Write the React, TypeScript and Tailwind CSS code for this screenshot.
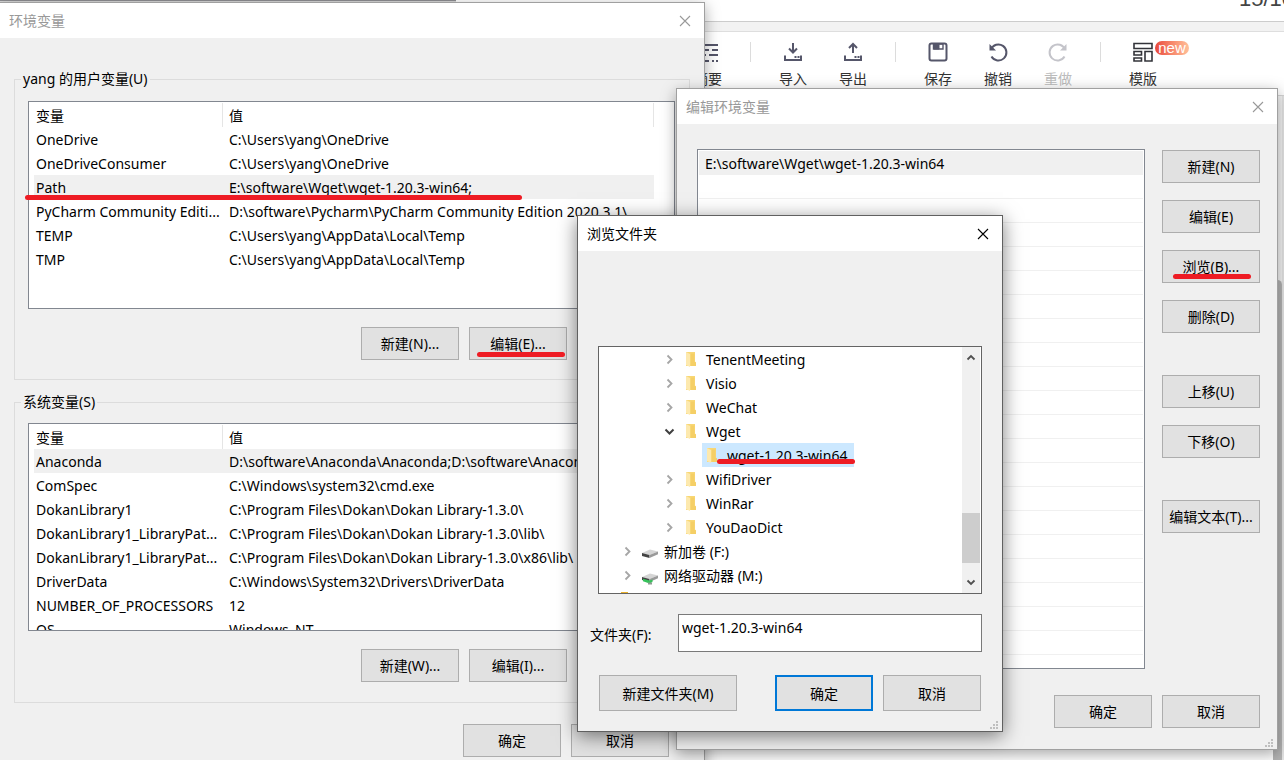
import React from "react";

type Pair = [string, string];

const userVars: Pair[] = [
  ["OneDrive", "C:\\Users\\yang\\OneDrive"],
  ["OneDriveConsumer", "C:\\Users\\yang\\OneDrive"],
  ["Path", "E:\\software\\Wget\\wget-1.20.3-win64;"],
  ["PyCharm Community Editi...", "D:\\software\\Pycharm\\PyCharm Community Edition 2020.3.1\\..."],
  ["TEMP", "C:\\Users\\yang\\AppData\\Local\\Temp"],
  ["TMP", "C:\\Users\\yang\\AppData\\Local\\Temp"],
];

const systemVars: Pair[] = [
  ["Anaconda", "D:\\software\\Anaconda\\Anaconda;D:\\software\\Anaconda"],
  ["ComSpec", "C:\\Windows\\system32\\cmd.exe"],
  ["DokanLibrary1", "C:\\Program Files\\Dokan\\Dokan Library-1.3.0\\"],
  ["DokanLibrary1_LibraryPat...", "C:\\Program Files\\Dokan\\Dokan Library-1.3.0\\lib\\"],
  ["DokanLibrary1_LibraryPat...", "C:\\Program Files\\Dokan\\Dokan Library-1.3.0\\x86\\lib\\"],
  ["DriverData", "C:\\Windows\\System32\\Drivers\\DriverData"],
  ["NUMBER_OF_PROCESSORS", "12"],
  ["OS", "Windows_NT"],
];

function Stroke({ className }: { className: string }) {
  return <span aria-hidden="true" className={"absolute z-10 h-[5px] rounded-full bg-[#ee1c24] " + className} />;
}

function Btn({
  children,
  className = "w-[98px] h-[33px]",
  primary = false,
}: {
  children: React.ReactNode;
  className?: string;
  primary?: boolean;
}) {
  return (
    <button
      type="button"
      className={
        "relative flex shrink-0 items-center justify-center whitespace-nowrap bg-[#e1e1e1] " +
        (primary ? "border-2 border-[#0078d7] " : "border border-[#adadad] ") +
        className
      }
    >
      {children}
    </button>
  );
}

function TitleBar({ title, active = false }: { title: string; active?: boolean }) {
  return (
    <header className={"flex h-[35px] shrink-0 items-center justify-between bg-white pr-[13px] pl-[9px] " + (active ? "text-black" : "text-[#999999]")}>
      <h2>{title}</h2>
      <button type="button" aria-label="关闭" className="flex size-[12px] items-center justify-center">
        <svg width="12" height="12" viewBox="0 0 12 12" fill="none" stroke="currentColor" strokeWidth="1.1">
          <path d="M1 1l10 10M11 1L1 11" />
        </svg>
      </button>
    </header>
  );
}

function Grip() {
  return (
    <svg className="absolute right-[3px] bottom-[1px]" width="9" height="9" viewBox="0 0 9 9" fill="#bfbfbf" aria-hidden="true">
      <path d="M6 0h2v2H6zM3 3h2v2H3zM6 3h2v2H6zM0 6h2v2H0zM3 6h2v2H3zM6 6h2v2H6z" />
    </svg>
  );
}

function VarTable({ rows, selected }: { rows: Pair[]; selected: number }) {
  return (
    <div className="h-[208px] overflow-hidden border border-[#828790] bg-white pt-px pl-[5px]">
      <table className="w-[620px] table-fixed border-separate border-spacing-0 text-left">
        <thead>
          <tr className="h-[24px]">
            <th scope="col" className="w-[189px] border-r border-[#e5e5e5] pt-[2px] pb-0 pl-[2px] font-normal">变量</th>
            <th scope="col" className="border-r border-[#e5e5e5] pt-[2px] pb-0 pl-[6px] font-normal">值</th>
          </tr>
        </thead>
        <tbody>
          {rows.map(([name, value], i) => (
            <tr key={i} className={"h-[24px] " + (i === selected ? "bg-[#f0f0f0]" : "")}>
              <td className="overflow-hidden pt-[2px] pb-0 pl-[2px] whitespace-nowrap">{name}</td>
              <td className="overflow-hidden pt-[2px] pb-0 pl-[6px] whitespace-nowrap">{value}</td>
            </tr>
          ))}
        </tbody>
      </table>
    </div>
  );
}

function Group({ title, children }: { title: string; children: React.ReactNode }) {
  return (
    <fieldset className="mr-[14px] ml-[14px] h-[312px] min-w-0 border border-[#dcdcdc] pr-[14px] pl-[13px]">
      <legend className="-ml-[7px] h-[22px] px-[2px] leading-[22px]">{title}</legend>
      {children}
    </fieldset>
  );
}

function EnvWindow() {
  return (
    <section className="absolute top-[2px] -left-px flex h-[780px] w-[706px] flex-col border border-[#a0a0a0] bg-[#f0f0f0] shadow-[0_4px_14px_rgba(0,0,0,0.35)]">
      <TitleBar title="环境变量" />
      <div className="flex flex-col pt-[30px]">
        <Group title="yang 的用户变量(U)">
          <div className="relative pt-[11px]">
            <VarTable rows={userVars} selected={2} />
            <Stroke className="top-[105px] -left-[3px] w-[497px]" />
          </div>
          <div className="mt-[18px] flex gap-[10px] pl-[333px]">
            <Btn>新建(N)...</Btn>
            <Btn>
              编辑(E)...
              <Stroke className="top-[24px] left-[7px] w-[88px]" />
            </Btn>
          </div>
        </Group>
        <div className="h-[11px]" />
        <Group title="系统变量(S)">
          <div className="pt-[10px]">
            <VarTable rows={systemVars} selected={0} />
          </div>
          <div className="mt-[18px] flex gap-[10px] pl-[333px]">
            <Btn>新建(W)...</Btn>
            <Btn>编辑(I)...</Btn>
          </div>
        </Group>
        <div className="mt-[21px] flex justify-end gap-[10px] pr-[35px]">
          <Btn>确定</Btn>
          <Btn>取消</Btn>
        </div>
      </div>
    </section>
  );
}

function EditWindow() {
  return (
    <section className="absolute top-[88px] left-[676px] flex h-[662px] w-[602px] flex-col border border-[#a0a0a0] bg-[#f0f0f0] shadow-[0_4px_14px_rgba(0,0,0,0.35)]">
      <TitleBar title="编辑环境变量" />
      <div className="flex gap-[17px] pt-[25px] pr-[17px] pl-[20px]">
        <ul className="h-[520px] flex-1 overflow-hidden border border-[#828790] bg-white p-px">
          <li className="h-[24px] bg-[#f0f0f0] pl-[6px] leading-[26px]">E:\software\Wget\wget-1.20.3-win64</li>
          {Array.from({ length: 21 }, (_, i) => (
            <li key={i} aria-hidden="true" className="h-[24px] border-b border-[#f0f0f0]" />
          ))}
        </ul>
        <div className="flex flex-col gap-[17px] pt-px">
          <Btn>新建(N)</Btn>
          <Btn>编辑(E)</Btn>
          <Btn>
            浏览(B)...
            <Stroke className="top-[23px] left-[10px] w-[78px]" />
          </Btn>
          <Btn>删除(D)</Btn>
          <div className="flex flex-col gap-[17px] pt-[25px]">
            <Btn>上移(U)</Btn>
            <Btn>下移(O)</Btn>
          </div>
          <div className="pt-[25px]">
            <Btn>编辑文本(T)...</Btn>
          </div>
        </div>
      </div>
      <div className="mt-[26px] flex justify-end gap-[10px] pr-[17px]">
        <Btn>确定</Btn>
        <Btn>取消</Btn>
      </div>
      <Grip />
    </section>
  );
}

function Chevron({ open = false }: { open?: boolean }) {
  return (
    <svg className="shrink-0" width="16" height="16" viewBox="0 0 16 16" fill="none" stroke={open ? "#404040" : "#a6a6a6"} strokeWidth={open ? 2 : 1.8} aria-hidden="true">
      {open ? <path d="M3.5 5.5L7.500 9.500l4-4" /> : <path d="M5.500 3.500L9.500 7.500l-4 4" />}
    </svg>
  );
}

function Folder() {
  return (
    <svg className="shrink-0" width="18" height="18" viewBox="0 0 18 18" aria-hidden="true">
      <path d="M3 1h9v9.500l1 1V15H3z" fill="#f8d775" />
      <path d="M8 2.500h3.500V11l1.500.500V15H8z" fill="#f5cf66" />
      <path d="M3 1l4 2v13l-4-2z" fill="#fde9ae" />
    </svg>
  );
}

function Drive({ network = false }: { network?: boolean }) {
  return (
    <svg className="shrink-0" width="18" height="18" viewBox="0 0 18 18" aria-hidden="true">
      <path d="M1 10l8-3.500 8 2L8.500 12z" fill="#d5d5d5" />
      <path d="M1 10l7.500 2v3L1 13z" fill="#444" />
      <path d="M8.500 12L17 8.500v2.800L8.500 15z" fill="#9a9a9a" />
      {network && (
        <>
          <path d="M2 11.800l6.500 1.800 3-1v2.400l-3 1.500L2 14.300z" fill="#36c25a" />
          <path d="M7 15.500h4v2H7z" fill="#8d9a90" />
        </>
      )}
    </svg>
  );
}

function TreeItem({ name, kind = "folder", open = false }: { name: string; kind?: "folder" | "drive" | "network"; open?: boolean }) {
  return (
    <li className={"flex h-[24px] items-center gap-[5px] pt-px " + (kind === "folder" ? "pl-[63px]" : "pl-[21px]")}>
      <Chevron open={open} />
      {kind === "folder" ? <Folder /> : <Drive network={kind === "network"} />}
      <span>{name}</span>
    </li>
  );
}

function BrowseWindow() {
  return (
    <section className="absolute top-[215px] left-[577px] flex h-[517px] w-[426px] flex-col border border-[#606060] bg-[#f0f0f0] shadow-[0_4px_18px_rgba(0,0,0,0.5)]">
      <TitleBar title="浏览文件夹" active />
      <div className="flex flex-col pt-[95px] pr-[20px] pl-[20px]">
        <div className="flex h-[248px] border border-[#646464] bg-white">
          <ul className="relative h-full flex-1 overflow-hidden">
            <TreeItem name="TenentMeeting" />
            <TreeItem name="Visio" />
            <TreeItem name="WeChat" />
            <TreeItem name="Wget" open />
            <li className="flex h-[24px] pl-[103px]">
              <span className="relative flex w-[152px] items-center gap-[5px] bg-[#cce8ff] pt-px pl-[2px]">
                <Folder />
                <span>wget-1.20.3-win64</span>
                <Stroke className="top-[16px] left-[15px] w-[138px]" />
              </span>
            </li>
            <TreeItem name="WifiDriver" />
            <TreeItem name="WinRar" />
            <TreeItem name="YouDaoDict" />
            <TreeItem name="新加卷 (F:)" kind="drive" />
            <TreeItem name="网络驱动器 (M:)" kind="network" />
            <li aria-hidden="true" className="flex pt-[5px] pl-[22px]">
              <span className="h-[6px] w-[7px] bg-[#e8b02c]" />
            </li>
          </ul>
          <div className="mr-px flex w-[18px] flex-col items-center justify-between bg-[#f0f0f0] py-[6px]" aria-hidden="true">
            <svg width="10" height="10" viewBox="0 0 10 10" fill="none" stroke="#505050" strokeWidth="1.8">
              <path d="M1.500 6.500L5 3l3.500 3.500" />
            </svg>
            <div className="mt-[136px] h-[50px] w-full bg-[#cdcdcd]" />
            <svg width="10" height="10" viewBox="0 0 10 10" fill="none" stroke="#505050" strokeWidth="1.8">
              <path d="M1.500 3.500L5 7l3.500-3.500" />
            </svg>
          </div>
        </div>
        <div className="-ml-[8px] mt-[20px] flex items-center justify-between">
          <label htmlFor="folder" className="pt-[4px]">文件夹(F):</label>
          <input
            id="folder"
            type="text"
            defaultValue="wget-1.20.3-win64"
            className="h-[38px] w-[304px] border border-[#7a7a7a] bg-white pr-[3px] pb-[12px] pl-[3px] outline-none"
          />
        </div>
        <div className="mt-[23px] flex gap-[10px] pr-px pl-px">
          <Btn className="mr-auto h-[36px] w-[138px] pt-px">新建文件夹(M)</Btn>
          <Btn primary className="h-[36px] w-[98px] pt-px">确定</Btn>
          <Btn className="h-[36px] w-[98px] pt-px">取消</Btn>
        </div>
      </div>
      <Grip />
    </section>
  );
}

function Tool({ label, disabled = false, children }: { label: string; disabled?: boolean; children: React.ReactNode }) {
  return (
    <button
      type="button"
      disabled={disabled}
      className={"relative flex w-[60px] shrink-0 flex-col items-center gap-[6px] " + (disabled ? "text-[#bcbcbc]" : "text-[#333333]")}
    >
      <svg width="22" height="22" viewBox="0 0 22 22" fill="none" stroke={disabled ? "#c4c4ca" : "#55566a"} strokeWidth="2" aria-hidden="true">
        {children}
      </svg>
      <span className="leading-[20px]">{label}</span>
    </button>
  );
}

function Divider() {
  return (
    <span aria-hidden="true" className="flex w-[25px] shrink-0 justify-center pt-px">
      <span className="h-[20px] w-px bg-[#dcdcdc]" />
    </span>
  );
}

function Backdrop() {
  return (
    <main className="flex h-full flex-col">
      <div className="flex h-[22px] justify-end overflow-hidden border-b border-[#cccccc] bg-white">
        <span className="-mt-[15px] w-[45px] font-['Liberation_Sans',sans-serif] text-[22px] leading-[28px] whitespace-nowrap text-[#444444]">15/10</span>
      </div>
      <div className="h-[10px] border-b border-[#dedede] bg-[#f2f2f2]" />
      <div className="flex h-[64px] items-start border-b border-[#d5d5d5] bg-white pt-[9px] pl-[678px]">
        <Tool label="摘要">
          <path d="M4 4h17M3 9h9M15 9h6M4 14h5M12 14h9M3 20h9M15 20h2M19 20h2" />
        </Tool>
        <Divider />
        <Tool label="导入">
          <path d="M11 2v9M7 7.500l4 4 4-4M3 14.500v4.500h16v-4.500" />
          <path d="M12.500 16h2M15.500 16h2" />
        </Tool>
        <Tool label="导出">
          <path d="M11 12V3M7 7l4-4 4 4M3 14.500v4.500h16v-4.500" />
          <path d="M12.500 16h2M15.500 16h2" />
        </Tool>
        <Divider />
        <Tool label="保存">
          <rect x="2.500" y="2.500" width="17" height="17" rx="2" />
          <path d="M6.500 3h9.500v5H6.500z" strokeWidth="1.400" />
          <path d="M7 3h5v5H7z" fill="#55566a" strokeWidth="1" />
        </Tool>
        <Tool label="撤销">
          <path d="M4 8.500A8 8 0 1 1 4.500 15.500" />
          <path d="M2.500 3v6.500H9z" fill="#55566a" stroke="none" />
        </Tool>
        <Tool label="重做" disabled>
          <path d="M18 8.500A8 8 0 1 0 17.500 15.500" />
          <path d="M19.500 3v6.500H13z" fill="#c4c4ca" stroke="none" />
        </Tool>
        <Divider />
        <div className="relative">
          <Tool label="模版">
            <path d="M2 2.500h18v5H2zM2 10.500h7.500v3.500H2zM2 17h7.500v3H2zM13 10.500h7V20h-7z" stroke="#33343a" strokeWidth="1.600" />
          </Tool>
          <span className="absolute top-0 left-[42px] flex h-[14px] w-[34px] items-center justify-center rounded-full bg-linear-to-r from-[#e8463c] to-[#ffc09a] font-['Liberation_Sans',sans-serif] text-[15px] leading-[14px] text-white">
            new
          </span>
        </div>
      </div>
      <div className="flex flex-1 justify-end bg-white">
        <div className="flex w-[11px] flex-col border-r-2 border-[#e4e4e4] bg-[#f4f4f4] pt-[184px]">
          <div className="flex-1 rounded-t-full bg-[#b4b4b4]" />
        </div>
      </div>
    </main>
  );
}

export default function App() {
  return (
    <div className="relative h-screen w-full overflow-hidden bg-white font-['Noto_Sans','Noto_Sans_CJK_SC',sans-serif] text-[14px] leading-[20px] text-black">
      <Backdrop />
      <div className="absolute top-0 left-0 h-[2px] w-[456px] border-b border-[#d8d8d8] bg-[#8e8e92]" aria-hidden="true" />
      <EnvWindow />
      <EditWindow />
      <BrowseWindow />
    </div>
  );
}
